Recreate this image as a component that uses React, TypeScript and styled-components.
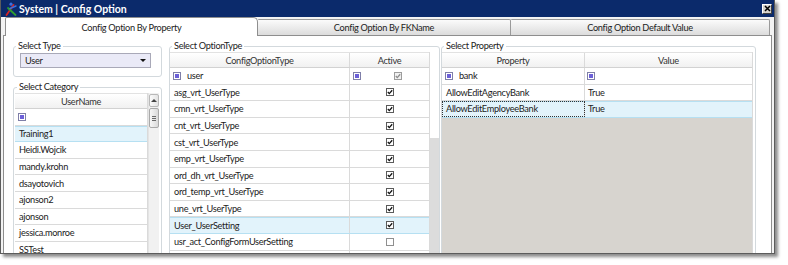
import React from "react";
import styled, { createGlobalStyle, css } from "styled-components";

const Global = createGlobalStyle`
  html, body { margin: 0; padding: 0; background: #fff; }
  body { font-family: Lato, "Liberation Sans", sans-serif; font-size: 9.2px; letter-spacing: -0.3px; color: #222; }
  * { box-sizing: border-box; }
`;

const Stage = styled.div`
  width: 788px;
  height: 265px;
  overflow: hidden;
  background: #fff;
`;

const Window = styled.div`
  width: 775px;
  height: 254px;
  display: flex;
  flex-direction: column;
  border: 1px solid #5c5c5c;
  border-top: none;
  background: #f3f3f3;
  box-shadow: 3px 3px 3px rgba(0, 0, 0, 0.45);
`;

const TitleBar = styled.div`
  height: 17px;
  flex: none;
  display: flex;
  align-items: center;
  gap: 1px;
  padding: 0 2px 0 4px;
  background: #0b2a6b;
  color: #fff;
  font: bold 10.5px Lato, "Liberation Sans", sans-serif;
  letter-spacing: 0;
`;

const TitleText = styled.span`
  margin-left: 1px;
`;

const CloseBtn = styled.div`
  margin-left: auto;
  width: 10px;
  height: 10px;
  display: flex;
  align-items: center;
  justify-content: center;
  background: #d6d3ce;
  border: 1px solid;
  border-color: #fff #404040 #404040 #fff;
`;

const Body = styled.div`
  flex: 1;
  min-height: 0;
  display: flex;
  flex-direction: column;
  padding: 0 2px;
`;

const TabStrip = styled.div`
  height: 18px;
  flex: none;
  display: flex;
  align-items: flex-end;
  padding-left: 2px;
`;

const Tab = styled.div<{ $active?: boolean; $w: number }>`
  width: ${(p) => p.$w}px;
  flex: none;
  display: flex;
  align-items: center;
  justify-content: center;
  color: #222;
  white-space: nowrap;
  ${(p) =>
    p.$active
      ? css`
          height: 19px;
          margin-bottom: -1px;
          position: relative;
          z-index: 1;
          background: #fff;
          border: 1px solid #8e8e8e;
          border-bottom: none;
          border-radius: 2px 5px 0 0;
        `
      : css`
          height: 16px;
          background: linear-gradient(#fbfbfb, #dcdcdc);
          border: 1px solid #9a9a9a;
          border-bottom: none;
          border-left: none;
          border-radius: 1px 2px 0 0;
        `}
`;

const Panel = styled.div`
  flex: 1;
  min-height: 0;
  overflow: hidden;
  display: flex;
  align-items: flex-start;
  padding: 4px 0 0 9px;
  background: #fff;
  border: 1px solid #8e8e8e;
  border-bottom: none;
`;

const LeftCol = styled.div`
  width: 149px;
  flex: none;
  display: flex;
  flex-direction: column;
  gap: 4px;
`;

const GroupBox = styled.fieldset<{ $w: number; $ml?: number; $pad?: string }>`
  width: ${(p) => p.$w}px;
  flex: none;
  margin: 0 0 0 ${(p) => p.$ml ?? 0}px;
  min-width: 0;
  padding: ${(p) => p.$pad ?? "0"};
  border: 1px solid #d3d9dd;
  border-radius: 3px;
`;

const Legend = styled.legend`
  margin-left: 2px;
  padding: 0 2px;
  line-height: 12px;
  font-size: 9.2px;
  color: #222;
`;

const Select = styled.div`
  margin: 1px 0 0 6px;
  width: 131px;
  height: 15px;
  display: flex;
  align-items: center;
  justify-content: space-between;
  padding: 0 4px;
  background: #eaeaf7;
  border: 1px solid #a9a9b8;
`;

const Caret = styled.span`
  width: 0;
  height: 0;
  border-left: 3px solid transparent;
  border-right: 3px solid transparent;
  border-top: 3px solid #111;
`;

const GridWrap = styled.div`
  display: flex;
  align-items: stretch;
`;

const Table = styled.div<{ $w: number }>`
  width: ${(p) => p.$w}px;
  flex: none;
  display: flex;
  flex-direction: column;
  border-right: 1px solid #dadada;
`;

const HeadRow = styled.div`
  height: 16px;
  flex: none;
  display: flex;
  background: linear-gradient(#ffffff, #f1f1f1);
  border-top: 1px solid #e2e2e2;
  border-bottom: 1px solid #d2d2d2;
  color: #333;
`;

const HeadCell = styled.div<{ $w: number; $last?: boolean }>`
  width: ${(p) => p.$w}px;
  flex: none;
  display: flex;
  align-items: center;
  justify-content: center;
  border-right: ${(p) => (p.$last ? "none" : "1px solid #dadada")};
`;

const Row = styled.div<{ $sel?: boolean }>`
  height: 16.6px;
  flex: none;
  display: flex;
  border-bottom: 1px solid #dadada;
  ${(p) =>
    p.$sel &&
    css`
      background: #e2f3fb;
      border-bottom-color: #b6e0f2;
      box-shadow: inset 0 1px 0 #b6e0f2;
    `}
`;

const Cell = styled.div<{ $w: number; $last?: boolean; $center?: boolean; $focus?: boolean; $pl?: number }>`
  width: ${(p) => p.$w}px;
  flex: none;
  display: flex;
  align-items: center;
  gap: 6px;
  padding-left: ${(p) => p.$pl ?? 4}px;
  justify-content: ${(p) => (p.$center ? "center" : "flex-start")};
  border-right: ${(p) => (p.$last ? "none" : "1px solid #dadada")};
  white-space: nowrap;
  overflow: hidden;
  ${(p) =>
    p.$focus &&
    css`
      outline: 1px dotted #333;
      outline-offset: -1px;
    `}
`;

const CheckSlot = styled.div`
  flex: 1;
  display: flex;
  justify-content: center;
`;

const FilterIcon = styled.span`
  width: 8px;
  height: 8px;
  flex: none;
  padding: 1px;
  border: 1px solid #7f7fa8;
  background: #6c60d8;
  background-clip: content-box;
`;

const VScroll = styled.div`
  width: 11px;
  flex: none;
  display: flex;
  flex-direction: column;
  align-items: center;
  gap: 1px;
  padding-top: 1px;
  background: #f1f1f1;
  border-left: 1px solid #e4e4e4;
`;

const ScrollBtn = styled.div`
  width: 10px;
  height: 13px;
  display: flex;
  align-items: center;
  justify-content: center;
  border: 1px solid #b8b8b8;
  border-radius: 2px;
  background: linear-gradient(to right, #fbfbfb, #e3e3e3);
`;

const UpArrow = styled.span`
  width: 0;
  height: 0;
  border-left: 3px solid transparent;
  border-right: 3px solid transparent;
  border-bottom: 3px solid #444;
`;

const Thumb = styled.div`
  width: 10px;
  height: 20px;
  display: flex;
  align-items: center;
  justify-content: center;
  border: 1px solid #a9a9a9;
  border-radius: 2px;
  background: linear-gradient(to right, #f7f7f7, #dadada);
`;

const Grip = styled.span`
  width: 4px;
  height: 5px;
  border-top: 1px solid #6a6a6a;
  border-bottom: 1px solid #6a6a6a;
  background: linear-gradient(#6a6a6a, #6a6a6a) center / 100% 1px no-repeat;
`;

const VStrip = styled.div`
  width: 9px;
  flex: none;
  display: flex;
  flex-direction: column;
  background: #dcdcdc;
`;

const VStripThumb = styled.div`
  height: 86px;
  background: #fff;
`;

const GrayFill = styled.div`
  height: 200px;
  background: #d7d4cf;
`;

const Check = ({ checked, dim }: { checked: boolean; dim?: boolean }) => (
  <svg width="8" height="8" viewBox="0 0 8 8">
    <rect
      x="0.5"
      y="0.5"
      width="7"
      height="7"
      fill={dim ? "#f1f1f1" : "#fff"}
      stroke={dim ? "#9c9c9c" : checked ? "#5a5a5a" : "#8f8f8f"}
    />
    {checked && (
      <path
        d="M1.8 4 L3.3 5.6 L6.2 2.3"
        fill="none"
        stroke={dim ? "#8c8c8c" : "#111"}
        strokeWidth="1.3"
      />
    )}
  </svg>
);

const AppIcon = () => (
  <svg width="12" height="14" viewBox="0 0 12 14">
    <path d="M1.5 13 L8.5 3" stroke="#d42424" strokeWidth="1.8" strokeLinecap="round" />
    <path d="M3 6 L10.5 13" stroke="#2f9e2f" strokeWidth="1.8" strokeLinecap="round" />
    <path d="M5 6.5 L11 4" stroke="#3d6fe0" strokeWidth="1.4" strokeLinecap="round" />
    <circle cx="6" cy="2.2" r="1.6" fill="#3d6fe0" />
  </svg>
);

const users = [
  "Heidi.Wojcik",
  "mandy.krohn",
  "dsayotovich",
  "ajonson2",
  "ajonson",
  "jessica.monroe",
  "SSTest",
];

const optionTypes: [string, boolean][] = [
  ["asg_vrt_UserType", true],
  ["cmn_vrt_UserType", true],
  ["cnt_vrt_UserType", true],
  ["cst_vrt_UserType", true],
  ["emp_vrt_UserType", true],
  ["ord_dh_vrt_UserType", true],
  ["ord_temp_vrt_UserType", true],
  ["une_vrt_UserType", true],
  ["User_UserSetting", true],
  ["usr_act_ConfigFormUserSetting", false],
  ["usr_UserScreenWork", false],
];

export default function App() {
  return (
    <Stage>
      <Global />
      <Window>
        <TitleBar>
          <AppIcon />
          <TitleText>System | Config Option</TitleText>
          <CloseBtn>
            <svg width="7" height="7" viewBox="0 0 7 7">
              <path d="M1 1 L6 6 M6 1 L1 6" stroke="#000" strokeWidth="1.5" />
            </svg>
          </CloseBtn>
        </TitleBar>
        <Body>
          <TabStrip>
            <Tab $active $w={253}>Config Option By Property</Tab>
            <Tab $w={253}>Config Option By FKName</Tab>
            <Tab $w={259}>Config Option Default Value</Tab>
          </TabStrip>
          <Panel>
            <LeftCol>
              <GroupBox $w={149} $pad="0 0 8px 0">
                <Legend>Select Type</Legend>
                <Select>
                  <span>User</span>
                  <Caret />
                </Select>
              </GroupBox>
              <GroupBox $w={149} $pad="0 2px 0 1px">
                <Legend>Select Category</Legend>
                <GridWrap>
                  <Table $w={133}>
                    <HeadRow>
                      <HeadCell $w={132} $last>UserName</HeadCell>
                    </HeadRow>
                    <Row>
                      <Cell $w={132} $last $pl={3}>
                        <FilterIcon />
                      </Cell>
                    </Row>
                    <Row $sel>
                      <Cell $w={132} $last>Training1</Cell>
                    </Row>
                    {users.map((u) => (
                      <Row key={u}>
                        <Cell $w={132} $last>{u}</Cell>
                      </Row>
                    ))}
                  </Table>
                  <VScroll>
                    <ScrollBtn>
                      <UpArrow />
                    </ScrollBtn>
                    <Thumb>
                      <Grip />
                    </Thumb>
                  </VScroll>
                </GridWrap>
              </GroupBox>
            </LeftCol>

            <GroupBox $w={271} $ml={7}>
              <Legend>Select OptionType</Legend>
              <GridWrap>
                <Table $w={260}>
                  <HeadRow>
                    <HeadCell $w={180}>ConfigOptionType</HeadCell>
                    <HeadCell $w={79} $last>Active</HeadCell>
                  </HeadRow>
                  <Row>
                    <Cell $w={180} $pl={3}>
                      <FilterIcon />
                      <span>user</span>
                    </Cell>
                    <Cell $w={79} $last $pl={3}>
                      <FilterIcon />
                      <CheckSlot>
                        <Check checked dim />
                      </CheckSlot>
                    </Cell>
                  </Row>
                  {optionTypes.map(([name, on]) => (
                    <Row key={name} $sel={name === "User_UserSetting"}>
                      <Cell $w={180}>{name}</Cell>
                      <Cell $w={79} $last $center $pl={0}>
                        <Check checked={on} />
                      </Cell>
                    </Row>
                  ))}
                </Table>
                <VStrip>
                  <VStripThumb />
                </VStrip>
              </GridWrap>
            </GroupBox>

            <GroupBox $w={315} $ml={1} $pad="0 1px 0 0">
              <Legend>Select Property</Legend>
              <Table $w={311}>
                <HeadRow>
                  <HeadCell $w={143}>Property</HeadCell>
                  <HeadCell $w={167} $last>Value</HeadCell>
                </HeadRow>
                <Row>
                  <Cell $w={143} $pl={3}>
                    <FilterIcon />
                    <span>bank</span>
                  </Cell>
                  <Cell $w={167} $last $pl={2}>
                    <FilterIcon />
                  </Cell>
                </Row>
                <Row>
                  <Cell $w={143}>AllowEditAgencyBank</Cell>
                  <Cell $w={167} $last $pl={3}>True</Cell>
                </Row>
                <Row $sel>
                  <Cell $w={143} $focus>AllowEditEmployeeBank</Cell>
                  <Cell $w={167} $last $pl={3}>True</Cell>
                </Row>
                <GrayFill />
              </Table>
            </GroupBox>
          </Panel>
        </Body>
      </Window>
    </Stage>
  );
}
